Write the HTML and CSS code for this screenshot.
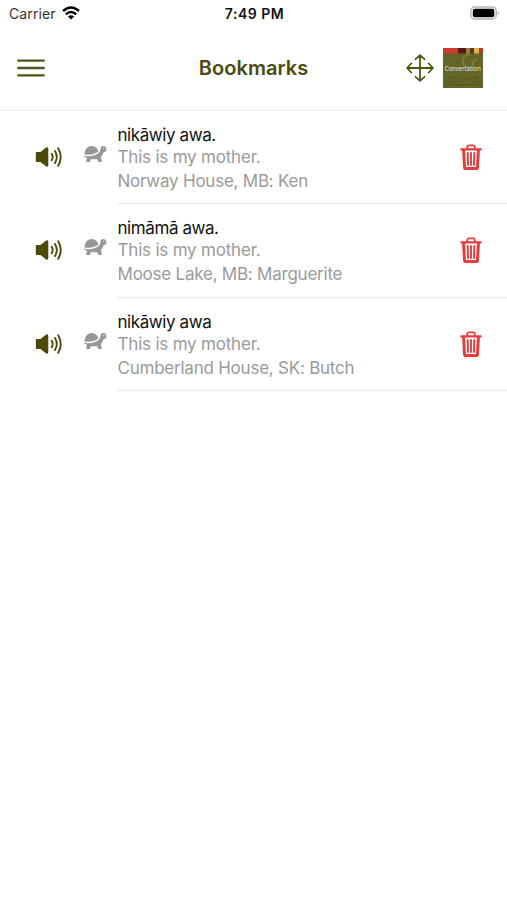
FILE: index.html
```html
<!DOCTYPE html>
<html lang="en">
<head>
<meta charset="utf-8">
<title>Bookmarks</title>
<link rel="stylesheet" href="styles.css">
</head>
<body>
<svg class="defs" aria-hidden="true">
  <symbol id="speaker" viewBox="0 0 28 22">
    <path fill="currentColor" d="M1.8 6H5.5L11.2 1.6Q13.3.7 13.3 3V19Q13.3 21.3 11.2 20.4L5.5 16H1.8Q.8 16 .8 15V7Q.8 6 1.8 6Z"/>
    <path fill="none" stroke="currentColor" stroke-width="1.9" stroke-linecap="round" d="M16.7 7.8Q18.7 11 16.7 14.2M20 5Q23.6 11 20 17M23.2 2.3Q28.3 11 23.2 19.7"/>
  </symbol>
  <symbol id="turtle" viewBox="0 0 24 18">
    <path fill="currentColor" d="M1.5 9.4C1.6 4.2 4.7.9 8.7.9C12.2.9 14.5 3.2 15.6 6.3C12.5 8.9 7.5 10.3 1.5 9.4Z"/>
    <path fill="currentColor" d="M.5 10.8C7 12 13 10.4 16.4 7.2C17.7 6 16.9 3.4 18.1 2.1C19.7.2 23.4 1 23.5 4C23.6 6.3 21.8 7.2 20.4 7.4C19.8 9.6 18.9 11.1 17.8 12.1L18.8 15.7Q19 17 17.9 17H15.5L13.8 14C12 14.4 9.8 14.4 8 14L6.8 17H4Q3 17 3.2 15.9L3.9 12.7Q1.5 12.3 .5 10.8Z"/>
    <circle cx="20.8" cy="3.5" r=".6" fill="#fff"/>
  </symbol>
  <symbol id="trash" viewBox="0 0 22 27">
    <g fill="none" stroke="currentColor" stroke-linecap="round" stroke-linejoin="round">
      <path stroke-width="2.1" d="M1.3 5.4H20.7"/>
      <path stroke-width="1.8" d="M7.2 4.7V3Q7.2 1.4 8.7 1.4H13.3Q14.8 1.4 14.8 3V4.7"/>
      <path stroke-width="3" d="M3.6 6.5L4.5 22.8Q4.6 24.6 6.2 24.6H15.8Q17.4 24.6 17.5 22.8L18.4 6.5"/>
      <path stroke-width="1.9" d="M7.7 9L8 21M11 9V21M14.3 9L14 21"/>
    </g>
  </symbol>
</svg>

<div class="status">
  <div class="carrier"><span>Carrier</span>
    <svg class="wifi" viewBox="0 0 18 14"><g fill="none" stroke="#000" stroke-width="2.5"><path d="M1 5Q9-2 17 5"/><path d="M3.8 8.2Q9 3.7 14.2 8.2"/></g><path d="M9 13.5L5.9 10.4Q9 8 12.1 10.4Z"/></svg>
  </div>
  <div class="time">7:49 PM</div>
  <div class="power">
    <svg class="battery" viewBox="0 0 31 14"><rect x=".9" y=".8" width="26.2" height="12.4" rx="4" fill="#fff" stroke="#b5b5b5" stroke-width="1.5"/><rect x="2.9" y="2.6" width="22.2" height="8.8" rx="2"/><path d="M28.5 5Q31.4 7 28.5 9Z" fill="#aaa"/></svg>
  </div>
</div>

<header class="header">
  <svg class="menu" viewBox="0 0 28 18"><path fill="none" stroke="#56551c" stroke-width="2.3" stroke-linecap="round" d="M1.2 1.7H26.8M1.2 9H26.8M1.2 16.3H26.8"/></svg>
  <h1 class="title">Bookmarks</h1>
  <div class="actions">
    <svg class="move" viewBox="0 0 28 28"><path fill="none" stroke="#4d570d" stroke-width="1.8" stroke-linecap="round" stroke-linejoin="round" d="M14 1.2V26.8M1.2 14H26.8M9.5 5.2L14 1.1L18.5 5.2M9.5 22.8L14 26.9L18.5 22.8M5.2 9.5L1.1 14L5.2 18.5M22.8 9.5L26.9 14L22.8 18.5"/></svg>
    <svg class="cover" viewBox="0 0 40 40">
      <path fill="#656525" d="M0 0H40V40H0Z"/>
      <path fill="#c9402c" d="M0 0H15V5.5H0Z"/><path fill="#5e1519" d="M15 0H23V5.5H15Z"/><path fill="#8d8144" d="M23 0H27V5.5H23Z"/><path fill="#553b18" d="M27 0H31V5.5H27Z"/><path fill="#dfb253" d="M31 0H36V5.5H31Z"/><path fill="#b63a25" d="M36 0H40V5.5H36Z"/>
      <path fill="none" stroke="#949456" stroke-width=".9" d="M27 6.3C17.5 6.2 17.5 19.5 26 19M34 12Q29 12 30 17"/>
      <path fill="none" stroke="#3f4320" stroke-width="1" d="M2 29H8V34H2M10 30H17M10 34H15M19 29V34M21 31H27M29 29H34V34H29M35 34H38M2 36.5H38" opacity=".5"/>
      <text class="cover-text" x="1.8" y="22.7" textLength="36" lengthAdjust="spacingAndGlyphs">Convertation</text>
    </svg>
  </div>
</header>

<main>
  <article class="row">
    <svg class="speaker"><use href="#speaker"/></svg>
    <svg class="turtle"><use href="#turtle"/></svg>
    <div class="content">
      <div class="text"><p class="phrase">nikāwiy awa.</p><p class="meaning">This is my mother.</p><p class="source">Norway House, MB: Ken</p></div>
      <svg class="trash"><use href="#trash"/></svg>
    </div>
  </article>
  <article class="row">
    <svg class="speaker"><use href="#speaker"/></svg>
    <svg class="turtle"><use href="#turtle"/></svg>
    <div class="content">
      <div class="text"><p class="phrase">nimāmā awa.</p><p class="meaning">This is my mother.</p><p class="source">Moose Lake, MB: Marguerite</p></div>
      <svg class="trash"><use href="#trash"/></svg>
    </div>
  </article>
  <article class="row">
    <svg class="speaker"><use href="#speaker"/></svg>
    <svg class="turtle"><use href="#turtle"/></svg>
    <div class="content">
      <div class="text"><p class="phrase">nikāwiy awa</p><p class="meaning">This is my mother.</p><p class="source">Cumberland House, SK: Butch</p></div>
      <svg class="trash"><use href="#trash"/></svg>
    </div>
  </article>
</main>
</body>
</html>
```

FILE: styles.css
```css
* { box-sizing: border-box; }
body { margin: 0; min-height: 100vh; background: #fff; font-family: Inter, "Liberation Sans", sans-serif; color: #111; }
svg { display: block; flex: none; }
h1, p { margin: 0; }
.defs { width: 0; height: 0; position: absolute; }
.status { height: 28px; display: grid; grid-template-columns: 1fr auto 1fr; align-items: center; padding: 0 7px 0 9px; font-size: 14px; }
.carrier { display: flex; align-items: center; gap: 6px; color: #333; margin-top: -1px; letter-spacing: .1px; }
.wifi { width: 18px; height: 14px; margin-top: -1px; }
.time { font-weight: 600; font-size: 14px; letter-spacing: .5px; margin-top: -1px; }
.power { display: flex; justify-content: flex-end; }
.battery { width: 30px; height: 14px; margin-top: -2px; }
.header { height: 83px; border-bottom: 1px solid #ececec; display: grid; grid-template-columns: 1fr auto 1fr; align-items: center; padding: 0 17px 2px; }
.menu { width: 28px; height: 18px; }
.title { font-size: 20px; line-height: 26px; font-weight: 600; color: #4b4a10; letter-spacing: .05px; }
.actions { display: flex; justify-content: flex-end; align-items: center; gap: 9px; margin: -1px 7px 0 0; }
.move { width: 28px; height: 28px; }
.cover { width: 40px; height: 40px; }
.cover-text { font: 6.4px "Open Sans", sans-serif; fill: #f2f2e5; }
.row { height: 93.3px; display: flex; padding-left: 35px; }
.speaker { width: 28px; height: 22px; margin-top: 35px; color: #4c4a0b; }
.turtle { width: 24px; height: 18px; margin: 34px 11px 0 20px; color: #97979b; }
.content { flex: 1; display: flex; justify-content: space-between; padding: 13px 25px 0 0; border-bottom: 1px solid #e6e6e6; }
.text { font-size: 17px; white-space: nowrap; margin-left: -.5px; }
.phrase { line-height: 22px; letter-spacing: -.42px; }
.meaning { line-height: 22px; color: #9a9a9a; letter-spacing: -.2px; }
.source { line-height: 26px; color: #9a9a9a; letter-spacing: -.23px; }
.trash { width: 22px; height: 27px; margin-top: 20px; color: #e63c3c; }
```
